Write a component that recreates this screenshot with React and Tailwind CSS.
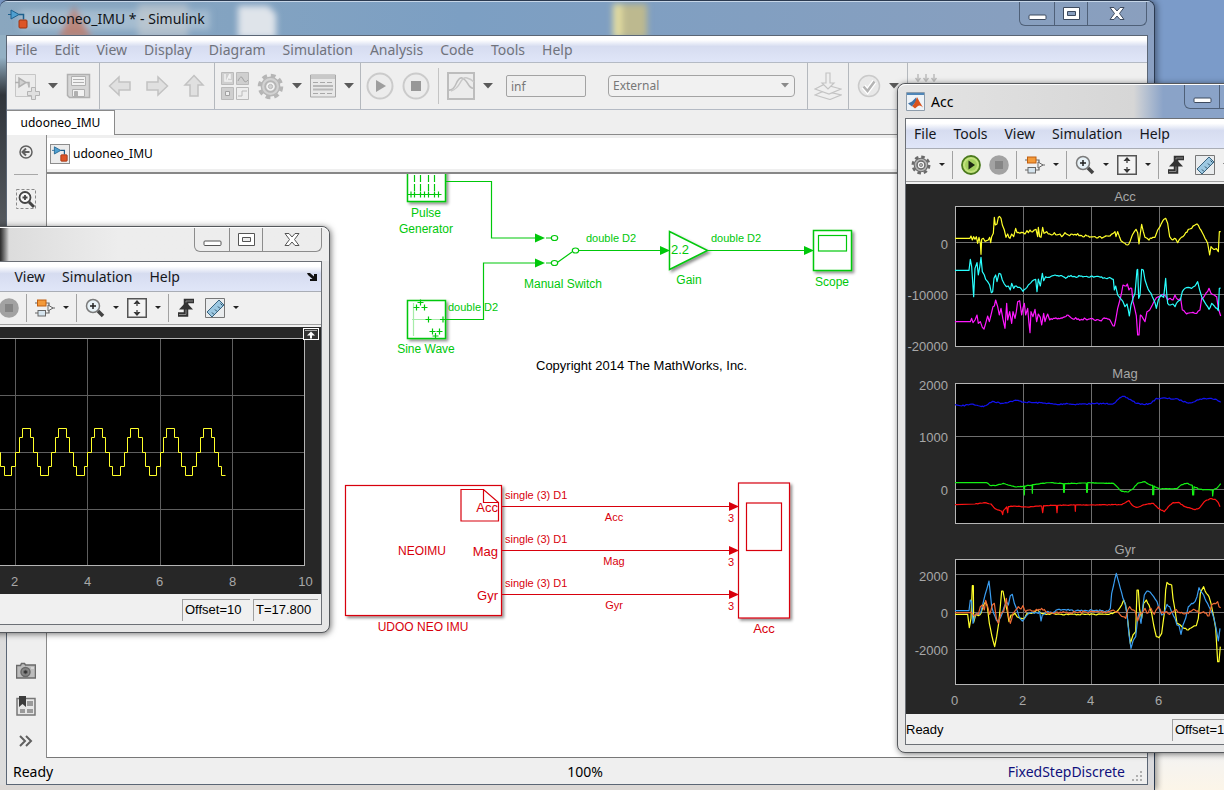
// App.jsx
import { Fragment } from "react";

const GREEN = "#00c80a";
const RED = "#d8000c";

/* ---------- shared window parts ---------- */

function CaptionButtons({ glass }) {
  const line = glass ? "border-[#4f6078]" : "border-[#8c8c8c]";
  const ink = glass ? "#3d4a5e" : "#555";
  return (
    <div className={`flex h-6 rounded-b-md border border-t-0 ${line}`}>
      <button aria-label="Minimize" className={`flex w-[35px] items-center justify-center border-r ${line}`}>
        <svg width="19" height="7" className="mt-2">
          <rect x="1" y="1" width="17" height="4.500" rx="1" fill="#fff" stroke={ink} />
        </svg>
      </button>
      <button aria-label="Maximize" className={`flex w-[33px] items-center justify-center border-r ${line}`}>
        <svg width="19" height="15">
          <path
            d="M1.500 1.500h16v12h-16z M5.500 5.500h8v4h-8z"
            fill="#fff"
            fillRule="evenodd"
            stroke={ink}
            strokeLinejoin="round"
          />
        </svg>
      </button>
      <button aria-label="Close" className="flex w-[58px] items-center justify-center">
        <svg width="18" height="15">
          <path
            d="M2 1.500h4l3 3.500 3-3.500h4l-4.500 6 4.500 6h-4l-3-3.500-3 3.500h-4l4.500-6z"
            fill="#fff"
            stroke={ink}
            strokeLinejoin="round"
          />
        </svg>
      </button>
    </div>
  );
}

function Caret({ label, small }) {
  return (
    <button aria-label={label} className={small ? "flex w-1.5 justify-center" : "flex w-2.5 justify-center"}>
      {small ? (
        <svg width="6" height="4">
          <path d="M0 0h6l-3 3z" fill="#222" />
        </svg>
      ) : (
        <svg width="10" height="6">
          <path d="M0 0h10l-5 5.500z" fill="#5a5a5a" />
        </svg>
      )}
    </button>
  );
}

function MenuBar({ items, className, children }) {
  return (
    <nav
      className={`flex items-center gap-[17px] bg-linear-to-b from-white from-15% via-[#d6dcf0] via-40% to-[#e0e6f8] pl-2 text-sm ${className}`}
    >
      {items.map((item) => (
        <button key={item}>{item}</button>
      ))}
      {children}
    </nav>
  );
}

function ModelIcon({ size }) {
  return (
    <svg width={size} height={size} viewBox="0 0 20 20">
      <path d="M0 5.500h3M3 1l8 4.500-8 4.500z" fill="#4e9fd0" stroke="#1d5f8c" />
      <path d="M11 5.500h4.500v5" fill="none" stroke="#1d5f8c" strokeWidth="1.500" />
      <rect x="11" y="11" width="8" height="8" rx="1" fill="#dd5527" stroke="#9c3413" />
    </svg>
  );
}

/* ---------- main window toolbar icons (greyed out) ---------- */

function IconNew() {
  return (
    <svg width="26" height="28" fill="none" stroke="#c6c6c6">
      <path d="M1.500 2.500h20v22h-20z" fill="#ebebeb" />
      <path d="M1 10.500h4M5 6v9l7-4.500zM12 10.500h3v5" stroke="#b0b0b0" strokeWidth="1.500" fill="#d0d0d0" />
      <path d="M17.500 15.500h4v4h4v4h-4v4h-4v-4h-4v-4h4z" fill="#e0e0e0" stroke="#b4b4b4" />
    </svg>
  );
}

function IconSave() {
  return (
    <svg width="25" height="26" fill="none" stroke="#b0b0b0">
      <path d="M1.500 1.500h22v23h-20l-2-2z" fill="#d6d6d6" strokeWidth="1.500" />
      <path d="M5.500 3.500h14v9h-14z" fill="#f2f2f2" />
      <path d="M7 6.500h11M7 9.500h11" />
      <path d="M6.500 16.500h12v7h-12z" fill="#f2f2f2" />
      <path d="M8.500 18.500h3v5h-3z" fill="#b0b0b0" />
    </svg>
  );
}

function IconArrow({ turn }) {
  return (
    <svg width="24" height="24" viewBox="0 0 24 24" className={turn}>
      <path d="M1.500 12l9.500-9v5h11v8h-11v5z" fill="#e0e0e0" stroke="#c2c2c2" strokeWidth="1.500" />
    </svg>
  );
}

function IconLibrary() {
  return (
    <svg width="28" height="28" fill="none" stroke="#bababa">
      <path d="M.5.500h12v12h-12zM15.500.500h12v12h-12zM.5 15.500h12v12h-12z" fill="#cfcfcf" />
      <path d="M15.500 15.500h12v12h-12z" fill="#ededed" />
      <path d="M4 2v7h7M6 8l3-6v5" stroke="#f2f2f2" strokeWidth="1.500" />
      <path d="M17 9q3-7 5-2t5 1" stroke="#a2a2a2" />
      <path d="M4.500 19.500h4v4h-4z" fill="#eee" stroke="#a2a2a2" />
      <path d="M17 24h4v-5h5" />
    </svg>
  );
}

// rounded cog shared by the main toolbar and the scope toolbars
function IconGear({ size, fill, stroke }) {
  return (
    <svg width={size} height={size} viewBox="0 0 28 28" fill="none">
      <circle cx="14" cy="14" r="11.500" stroke={stroke} strokeWidth="3.500" strokeDasharray="5 4.030" />
      <circle cx="14" cy="14" r="9.500" fill={fill} stroke={stroke} strokeWidth="1.500" />
      <circle cx="14" cy="14" r="5.500" fill="#f2f2f2" stroke={stroke} strokeWidth="2" />
      <circle cx="14" cy="14" r="2.200" fill={fill} stroke={stroke} />
    </svg>
  );
}

function IconList() {
  return (
    <svg width="26" height="24" fill="none" stroke="#a8a8a8">
      <path d="M.5 1h25v22h-25z" fill="#e8e8e8" />
      <path d="M1 3h24" stroke="#c8c8c8" strokeWidth="4" />
      <path d="M3 8.500h20" strokeDasharray="5 2" />
      <path d="M3 12h20M3 15.500h20" strokeWidth="2" stroke="#b8b8b8" />
      <path d="M3 19.500h20" strokeDasharray="5 2" />
    </svg>
  );
}

function IconRound({ stop }) {
  return (
    <svg width="28" height="28">
      <circle cx="14" cy="14" r="12.500" fill="#ececec" stroke="#cbcbcb" strokeWidth="2" />
      {stop ? <rect x="9" y="9" width="10" height="10" fill="#989898" /> : <path d="M10 8l10 6-10 6z" fill="#9e9e9e" />}
    </svg>
  );
}

function IconScope() {
  return (
    <svg width="28" height="28" fill="none" stroke="#bdbdbd">
      <path d="M1 1h26v26H1z" fill="#ececec" strokeWidth="2" />
      <path d="M1 18q5 1 8-6t6-6 6 6 6 4" strokeWidth="1.500" />
      <path d="M4 19q6-2 9-8t7-5 7 4" stroke="#c8c8c8" strokeWidth="1.500" />
    </svg>
  );
}

function IconDeploy() {
  return (
    <svg width="28" height="28" fill="#efefef" stroke="#c4c4c4" strokeWidth="1.200">
      <path d="M1 23l9-4 17 4-11 4.500z" />
      <path d="M1 17l9-4.500 17 4.500-12 5z" />
      <path d="M12 1h4v10h4l-6 6-6-6h4z" />
    </svg>
  );
}

function IconCheck() {
  return (
    <svg width="24" height="24" fill="none" stroke="#cacaca">
      <circle cx="12" cy="12" r="10.500" fill="#e8e8e8" strokeWidth="1.500" />
      <path d="M6.500 12.500l4 4.500 7-9.500" stroke="#fff" strokeWidth="5" />
      <path d="M6.500 12.500l4 4.500 7-9.500" stroke="#b4b4b4" strokeWidth="2.500" />
    </svg>
  );
}

function IconBuild() {
  return (
    <svg width="24" height="28" fill="none" stroke="#bdbdbd" strokeWidth="1.500">
      <path d="M4 2v7M12 2v7M20 2v7" />
      <path d="M1.500 6l2.500 3 2.500-3M9.500 6l2.500 3 2.500-3M17.500 6l2.500 3 2.500-3" />
    </svg>
  );
}

function MainToolbar() {
  const group = "flex items-center border-r border-[#b4b8bd]";
  return (
    <div className="flex h-12 border-y border-[#b4bac4] bg-[#efefef]">
      <div className={`${group} gap-2 pr-2 pl-[7px]`}>
        <button aria-label="New"><IconNew /></button>
        <Caret label="New options" />
        <button aria-label="Save"><IconSave /></button>
      </div>
      <div className={`${group} gap-[13px] px-2`}>
        <button aria-label="Back"><IconArrow /></button>
        <button aria-label="Forward"><IconArrow turn="rotate-180" /></button>
        <button aria-label="Up"><IconArrow turn="rotate-90" /></button>
      </div>
      <div className={`${group} gap-2 px-1.5`}>
        <button aria-label="Library"><IconLibrary /></button>
        <button aria-label="Settings"><IconGear size={27} fill="#d2d2d2" stroke="#b6b6b6" /></button>
        <Caret label="Settings options" />
        <button aria-label="Explorer"><IconList /></button>
        <Caret label="Explorer options" />
      </div>
      <div className={`${group} gap-2 pr-3 pl-[5px]`}>
        <button aria-label="Run"><IconRound /></button>
        <button aria-label="Stop"><IconRound stop /></button>
        <span className="h-9 w-px bg-[#c4c4c4]" />
        <button aria-label="Data inspector"><IconScope /></button>
        <Caret label="Inspector options" />
        <input
          aria-label="Stop time"
          defaultValue="inf"
          className="ml-[5px] h-[22px] w-20 rounded-xs border border-[#a3a3a3] bg-[#efefef] px-1 text-xs text-[#777]"
        />
        <div className="relative ml-3.5 flex">
          <select
            aria-label="Simulation mode"
            className="h-[22px] w-[187px] appearance-none rounded-sm border border-[#a3a3a3] bg-[#f1f1f1] px-1 text-xs text-[#777]"
          >
            <option>External</option>
          </select>
          <svg width="8" height="5" className="pointer-events-none absolute top-2 right-1.5">
            <path d="M0 0h8l-4 4.500z" fill="#8a8a8a" />
          </svg>
        </div>
      </div>
      <div className={`${group} px-1.5`}>
        <button aria-label="Deploy"><IconDeploy /></button>
      </div>
      <div className={`${group} gap-2 px-2`}>
        <button aria-label="Check"><IconCheck /></button>
        <Caret label="Check options" />
      </div>
      <div className="flex items-center px-1.5">
        <button aria-label="Build"><IconBuild /></button>
      </div>
    </div>
  );
}

/* ---------- palette on the left of the canvas ---------- */

function Palette() {
  return (
    <div className="flex w-[39px] shrink-0 flex-col items-center bg-[#efefef] pt-[7px] pr-0.5 pb-[7px]">
      <button aria-label="Hide palette">
        <svg width="20" height="20" fill="none" stroke="#606060">
          <circle cx="10" cy="10" r="6" strokeWidth="1.500" />
          <path d="M13.500 10h-6M10 6.500L6.500 10l3.500 3.500" strokeWidth="2" />
        </svg>
      </button>
      <span className="my-3 h-px w-6 bg-[#a8a8a8]" />
      <button aria-label="Fit to view" className="mt-0.5">
        <svg width="20" height="20" fill="none" stroke="#444">
          <path d="M.5.500h19v19h-19z" strokeDasharray="3 2" stroke="#8a8a8a" />
          <circle cx="9" cy="8.500" r="5.500" fill="#f8f8f8" strokeWidth="1.800" />
          <path d="M6.500 8.500h5M9 6v5" strokeWidth="1.800" />
          <path d="M13 13l5 5" strokeWidth="3" />
        </svg>
      </button>
      <div className="mt-auto flex flex-col gap-[15px]">
        <button aria-label="Screenshot">
          <svg width="20" height="20" fill="none" stroke="#6a6a6a">
            <path d="M.5 4.500h4l1-2h3l1 1.500h10v13h-19z" fill="#bcbcbc" strokeWidth="1.500" />
            <circle cx="9.500" cy="11" r="4.500" fill="#888" strokeWidth="1.500" />
            <circle cx="9.500" cy="11" r="2" fill="#333" />
            <path d="M15 7h3" stroke="#eee" />
          </svg>
        </button>
        <button aria-label="Model browser">
          <svg width="20" height="20" fill="none" stroke="#777">
            <path d="M1 2.500h18v16.500H1z" fill="#e6e6e6" strokeWidth="1.500" />
            <path d="M11 5h6v5h-6zM4 13h5v4H4zM11 13h6v4h-6z" fill="#9a9a9a" stroke="none" />
            <path d="M3 0h7v11l-3.500-3L3 11z" fill="#3c3c3c" stroke="none" />
          </svg>
        </button>
        <button aria-label="More">
          <svg width="20" height="20" fill="none" stroke="#606060" strokeWidth="2">
            <path d="M4 5l5 5-5 5M10 5l5 5-5 5" />
          </svg>
        </button>
      </div>
    </div>
  );
}

/* ---------- block diagram ---------- */

function Plus({ x, y }) {
  return <path d={`M${x - 3} ${y}h6M${x} ${y - 3}v6`} />;
}

function Arrow({ x, y, color }) {
  return <path d={`M${x} ${y}l-10-4.500v9z`} fill={color} stroke="none" />;
}

function Label({ x, y, size = 12, anchor = "middle", color, children }) {
  return (
    <text x={x} y={y} fontSize={size} textAnchor={anchor} fill={color} stroke="none">
      {children}
    </text>
  );
}

const SINE_MARKS = [
  [416.5, 307.5], [420.5, 302.5], [424.5, 307.5], [428.5, 319.5],
  [443, 319.5], [432.5, 331.5], [439.5, 331.5], [435.5, 336],
];

const SIGNALS = [
  { name: "Acc", y: 506.5 },
  { name: "Mag", y: 550.5 },
  { name: "Gyr", y: 594.5 },
];

function Diagram() {
  return (
    <svg className="absolute inset-0 size-full font-['Liberation_Sans',sans-serif]" fill="none">
      <defs>
        <filter id="shadow" x="-20%" y="-20%" width="150%" height="150%">
          <feDropShadow dx="2" dy="2" stdDeviation="1.500" floodColor="#000" floodOpacity="0.45" />
        </filter>
      </defs>
      <g transform="translate(-47 -174)">
        <g stroke={GREEN} strokeWidth="1.200">
          <g fill="#fff" filter="url(#shadow)" strokeWidth="1.500">
            <rect x="407.500" y="163.500" width="38" height="38" />
            <rect x="407.500" y="300.500" width="38" height="38" />
            <rect x="813.500" y="230.500" width="38" height="40" />
            <path d="M669.500 231.500v38l38-19z" />
          </g>
          <path d="M414.500 166v28M420.500 166v28M428.500 166v28M434.500 166v28" strokeDasharray="7 2" />
          <path d="M409 194.500h32" />
          {[411, 414.5, 420.5, 424.5, 428.5, 434.5, 438.5].map((x) => (
            <Plus key={x} x={x} y={194.5} />
          ))}
          <path d="M446 181.500h45.500v56.500H536M446 319.500h37.500V263H536" />
          <Arrow x={545} y={238} color={GREEN} />
          <Arrow x={545} y={263} color={GREEN} />
          <path d="M546 238h5M546 263h5M558 262l14-10M579 250.500h82M708 250.500h97" />
          <ellipse cx="554.500" cy="238" rx="3.200" ry="2.500" />
          <ellipse cx="554.500" cy="263" rx="3.200" ry="2.500" />
          <ellipse cx="575.500" cy="250.500" rx="3.200" ry="2.500" />
          <Arrow x={670} y={250.5} color={GREEN} />
          <Arrow x={814} y={250.5} color={GREEN} />
          <rect x="818.500" y="235.500" width="28" height="15.500" />
          <path d="M413.500 303v33M412 319.500h32" strokeOpacity="0.35" />
          {SINE_MARKS.map(([x, y]) => (
            <Plus key={`${x}-${y}`} x={x} y={y} />
          ))}
          <Label x={426} y={217} color={GREEN}>Pulse</Label>
          <Label x={426} y={233} color={GREEN}>Generator</Label>
          <Label x={426} y={353} color={GREEN}>Sine Wave</Label>
          <Label x={563} y={288} color={GREEN}>Manual Switch</Label>
          <Label x={689} y={284} color={GREEN}>Gain</Label>
          <Label x={832} y={286} color={GREEN}>Scope</Label>
          <Label x={671} y={254} size={13} anchor="start" color={GREEN}>2.2</Label>
          <Label x={586} y={242} size={11} anchor="start" color={GREEN}>double D2</Label>
          <Label x={711} y={242} size={11} anchor="start" color={GREEN}>double D2</Label>
          <Label x={448} y={311} size={11} anchor="start" color={GREEN}>double D2</Label>
        </g>

        <Label x={536} y={370} size={13} anchor="start" color="#000">
          Copyright 2014 The MathWorks, Inc.
        </Label>

        <g stroke={RED} strokeWidth="1.200">
          <g fill="#fff" filter="url(#shadow)">
            <rect x="345.500" y="485.500" width="156" height="130" />
            <rect x="738.500" y="483" width="51" height="135" />
          </g>
          <path d="M461 489.500h22.500l15 13v18.500H461zM483.500 489.500v13h15" />
          <rect x="746.500" y="503" width="35" height="47.500" />
          <Label x={422} y={555} color={RED}>NEOIMU</Label>
          <Label x={423} y={631} color={RED}>UDOO NEO IMU</Label>
          <Label x={764} y={633} size={13} color={RED}>Acc</Label>
          {SIGNALS.map(({ name, y }) => (
            <Fragment key={name}>
              <path d={`M502 ${y}H730`} />
              <Arrow x={739} y={y} color={RED} />
              <Label x={498} y={y + 5} size={13} anchor="end" color={RED}>{name}</Label>
              <Label x={505} y={y - 8} size={11} anchor="start" color={RED}>single (3) D1</Label>
              <Label x={614} y={y + 14} size={11} color={RED}>{name}</Label>
              <Label x={731} y={y + 15} size={11} color={RED}>3</Label>
            </Fragment>
          ))}
        </g>
      </g>
    </svg>
  );
}

function MainWindow() {
  return (
    <section className="mr-[69px] flex flex-1 flex-col overflow-hidden rounded-t-lg border-t border-r border-[#2b3a50] bg-[#7d9cc0] shadow-[2px_0_6px_rgba(0,0,0,0.4)]">
      <header className="relative flex h-[34px] shrink-0 items-start border-t border-[#c6d6e8] bg-linear-to-r from-[#8aa7bf] via-[#7c9fc3] via-40% to-[#8a9fbe] pr-[7px]">
        <svg className="absolute inset-0 size-full">
          <filter id="soft" x="-30%" y="-30%" width="160%" height="160%">
            <feGaussianBlur stdDeviation="3" />
          </filter>
          <g filter="url(#soft)">
            <rect x="20" y="8" width="190" height="20" fill="#b9cbda" opacity="0.6" />
            <path d="M58 36l16-32 18 32z" fill="#c07a68" opacity="0.8" />
            <rect x="138" y="2" width="50" height="34" fill="#c6ccd0" opacity="0.6" />
            <path d="M238 4h30l8 8v24h-38z" fill="#dfe4ea" />
            <rect x="613" y="2" width="34" height="34" fill="#bdb98f" />
            <rect x="613" y="2" width="9" height="34" fill="#e2dca0" />
          </g>
        </svg>
        <div className="relative flex h-full items-center gap-1 pl-2">
          <ModelIcon size={20} />
          <h1 className="text-sm text-[#101418]">udooneo_IMU * - Simulink</h1>
        </div>
        <div className="relative ml-auto">
          <CaptionButtons glass />
        </div>
      </header>

      <div className="flex flex-1">
        <div className="w-[7px] shrink-0 border-r border-[#5b6675] bg-linear-to-b from-[#93b0c4] from-3% via-[#30353b] via-8% to-[#dcdcdc] to-80%" />
        <div className="flex min-w-0 flex-1 flex-col border-y border-[#5b6675] bg-[#efefef]">
          <MenuBar
            className="h-[26px] shrink-0 pt-0.5 text-[#70737c]"
            items={["File", "Edit", "View", "Display", "Diagram", "Simulation", "Analysis", "Code", "Tools", "Help"]}
          />
          <MainToolbar />
          <div className="flex h-[25px] shrink-0">
            <button className="w-[108px] border-t border-r border-[#8a8a8a] bg-white text-xs">udooneo_IMU</button>
            <span className="flex-1 border-b border-[#8a8a8a]" />
          </div>
          <div className="flex flex-1">
            <Palette />
            <div className="flex min-w-0 flex-1 flex-col border-l border-[#8a8a8a]">
              <div className="flex h-[37px] shrink-0 items-center gap-[3px] border-y-3 border-[#efefef] bg-white pl-[3px] text-xs">
                <span className="border border-[#8c8c8c] bg-[#ececec] p-px">
                  <ModelIcon size={16} />
                </span>
                udooneo_IMU
              </div>
              <main className="relative flex-1 border-t-2 border-b border-[#878787] border-b-[#777] bg-white">
                <Diagram />
              </main>
            </div>
          </div>
          <footer className="relative flex h-[26px] shrink-0 items-center pt-0.5 pr-[22px] pl-1.5 text-sm">
            <span className="flex-1">Ready</span>
            <span className="pl-8">100%</span>
            <span className="flex-1 text-right text-[#10107c]">FixedStepDiscrete</span>
            <svg width="12" height="12" className="absolute right-1 bottom-0.5" fill="#b0b0b0">
              <path d="M9 1h2v2H9zM9 5h2v2H9zM5 5h2v2H5zM9 9h2v2H9zM5 9h2v2H5zM1 9h2v2H1z" />
            </svg>
          </footer>
        </div>
        <div className="w-[7px] shrink-0 border-l border-[#5b6675] bg-linear-to-b from-[#8aa0c2] from-10% to-[#d9d9dc] to-90%" />
      </div>
      <div className="h-[5px] shrink-0 bg-[#dcd8d5]" />
    </section>
  );
}

/* ---------- scope windows ---------- */

function ScopeToolbar() {
  const sep = <span className="-ml-px h-7 w-px bg-[#a2a2a2]" />;
  return (
    <div className="flex h-[33px] items-center gap-2 border-b border-[#a0a0a0] bg-[#f0f0f0] pl-[5px]">
      <button aria-label="Configuration"><IconGear size={20} fill="#b4b4b4" stroke="#6a6a6a" /></button>
      <Caret small label="Configuration options" />
      {sep}
      <button aria-label="Run">
        <svg width="20" height="20">
          <circle cx="10" cy="10" r="9" fill="#c2e27c" stroke="#4b7a1e" strokeWidth="1.800" />
          <circle cx="10" cy="10" r="6" fill="#a4d060" />
          <path d="M7.500 5.500l6.500 4.500-6.500 4.500z" fill="#1c2612" />
        </svg>
      </button>
      <button aria-label="Stop">
        <svg width="20" height="20">
          <circle cx="10" cy="10" r="9.800" fill="#a2a2a2" />
          <rect x="6" y="6" width="8" height="8" fill="#858585" />
        </svg>
      </button>
      {sep}
      <button aria-label="Highlight block">
        <svg width="20" height="20" fill="none" stroke="#666">
          <path d="M0 5h3M11 5h3v4M0 15h3M11 15h3v-4M14 10h6" strokeWidth="1.200" />
          <rect x="2.500" y="2" width="8.500" height="6" fill="#f39a3a" stroke="#c05f10" />
          <rect x="3" y="12.500" width="7.500" height="5.500" fill="#d5e4ee" />
          <path d="M13 7l5 3-5 3z" fill="#f5f5f5" />
        </svg>
      </button>
      <Caret small label="Highlight options" />
      {sep}
      <button aria-label="Zoom">
        <svg width="20" height="20" fill="none">
          <circle cx="8" cy="8" r="6.500" fill="#e8f2f7" stroke="#7b7b7b" strokeWidth="1.500" />
          <path d="M5 8h6M8 5v6" stroke="#222" strokeWidth="1.500" />
          <path d="M13 13l5 5" stroke="#444" strokeWidth="3.500" />
        </svg>
      </button>
      <Caret small label="Zoom options" />
      <button aria-label="Scale axes">
        <svg width="20" height="20">
          <path d="M.75.750h18.500v18.500H.75z" fill="#f4f4f4" stroke="#555" strokeWidth="1.500" />
          <path d="M10 2l3.500 4h-7zM10 18l3.500-4h-7z" fill="#333" />
          <path d="M10 5v3M10 12v3" stroke="#555" strokeWidth="1.500" />
        </svg>
      </button>
      <Caret small label="Scale options" />
      {sep}
      <button aria-label="Trigger">
        <svg width="20" height="20" fill="none">
          <path d="M1 16.500h8V3h8" stroke="#333" strokeWidth="4.500" />
          <path d="M2 16.500h7V3h7" stroke="#888" />
          <path d="M9 4l7 7.500H2z" fill="#333" />
        </svg>
      </button>
      <button aria-label="Measure">
        <svg width="20" height="20" fill="none">
          <path d="M.5.500h19v19H.5z" fill="#e9ecee" stroke="#777" />
          <path d="M2 14L14 2l5 5L7 19z" fill="#9cc8e2" stroke="#39647f" />
          <path d="M7 14.500l2 2M10 11.500l2 2M13 8.500l2 2M15.500 5.500l2 2" stroke="#26475c" />
        </svg>
      </button>
      <Caret small label="Measure options" />
    </div>
  );
}

function ScopeWindow({ title, glass, className, titleClass, menuExtra, time, children }) {
  return (
    <section
      className={`absolute w-[423px] rounded-lg border border-[#55585c] bg-[#e6e6e6] px-[7px] pb-[7px] shadow-[1px_1px_6px_rgba(0,0,0,0.55)] ${className}`}
    >
      <header className={`-mx-[7px] flex h-[34px] items-start rounded-t-lg border-t border-white px-[7px] ${titleClass}`}>
        <div className="flex h-full items-center gap-1.5 pl-px">
          <svg width="19" height="19">
            <path d="M.5.500h18v18H.5z" fill="#eef3f8" stroke="#8d9cab" />
            <path d="M1 1h17v2H1z" fill="#4f86b8" />
            <path d="M2 11.500l4-2 4-4 1 3-5 6z" fill="#3f72a6" />
            <path d="M6 14q3-2 5-9 2.500 5 6 10.500-3-3-5-1.500l-3 2.500z" fill="#d9531e" />
          </svg>
          <h2 className="text-sm">{title}</h2>
        </div>
        <div className="ml-auto">
          <CaptionButtons glass={glass} />
        </div>
      </header>
      <div className="border border-[#6c7076] bg-[#f0f0f0]">
        <MenuBar
          className="h-[30px] border-b border-[#a9adb5] text-[#15171c]"
          items={["File", "Tools", "View", "Simulation", "Help"]}
        >
          {menuExtra}
        </MenuBar>
        <ScopeToolbar />
        <div className="mt-0.5 bg-[#272727]">{children}</div>
        <footer className="flex h-[30px] items-center gap-[3px] pt-0.5 pr-[3px] font-['Liberation_Sans',sans-serif] text-[13px]">
          <span className="flex-1">Ready</span>
          <span className="h-[22px] w-[68px] border-t border-l border-[#a0a0a0] pl-0.5">Offset=10</span>
          <span className="h-[22px] w-[65px] border-t border-l border-[#a0a0a0] pl-0.5">{time}</span>
        </footer>
      </div>
    </section>
  );
}

const PLOT_FONT = "block w-full text-[13px] font-['Liberation_Sans',sans-serif]";

// one period of the sampled sine: [offset, level]
const SINE_STEPS = [
  [0, 452.5], [3.5, 437.5], [6.5, 428.5], [14.5, 437.5],
  [18, 452.5], [21.5, 466.5], [25, 475.5], [32.5, 466.5],
];

function sinePath() {
  let d = "M-24 475.5";
  for (let k = -1; k < 6; k++) {
    SINE_STEPS.forEach(([dx, y], i) => {
      if (k === 5 && i === 7) return;
      d += `H${Math.round(15 + 36.2 * k + dx) + 0.5}V${y}`;
    });
  }
  return d + "H225.5";
}

function SinePlot() {
  return (
    <svg height="267" className={PLOT_FONT} fill="none">
      <g transform="translate(84 -327)">
        <rect x="-60" y="338.500" width="364.500" height="227" fill="#000" stroke="#b5b5b5" />
        <path
          d="M15.500 339v226M87.500 339v226M160.500 339v226M232.500 339v226M-60 395.500h364M-60 452.500h364M-60 509.500h364"
          stroke="#5e5e5e"
        />
        <path d={sinePath()} stroke="#ffff2a" />
        <g fill="#a8a8a8" textAnchor="middle">
          <text x="14.500" y="586">2</text>
          <text x="87.500" y="586">4</text>
          <text x="159.500" y="586">6</text>
          <text x="232.500" y="586">8</text>
          <text x="305.500" y="586">10</text>
        </g>
        <rect x="303.500" y="328.500" width="15" height="11" fill="#333" stroke="#fff" />
        <path d="M305 330.500h12" stroke="#aaa" />
        <path d="M311 331.500l4 4h-3v3h-2v-3h-3z" fill="#fff" />
      </g>
    </svg>
  );
}

// Turns "x,y x,y ..." key points into a polyline with measurement noise.
function noisy(keys, amp) {
  const pts = keys.split(" ").map((p) => p.split(",").map(Number));
  let seed = 7;
  const rand = () => {
    seed = (seed * 16807) % 2147483647;
    return seed / 2147483647 - 0.5;
  };
  const out = [];
  pts.forEach(([x, y], i) => {
    out.push(`${x},${y}`);
    const next = pts[i + 1];
    if (!next || i === 0) return;
    const [nx, ny] = next;
    for (let t = x + 4; t < nx - 2; t += 4) {
      const base = y + ((ny - y) * (t - x)) / (nx - x);
      out.push(`${t},${(base + rand() * amp * 2).toFixed(1)}`);
    }
  });
  return out.join(" ");
}

const ACC_X = "180,175 225,175 228,168 232,180 236,170 240,178 244,170 248,190 252,172 256,190 258,223 260,178 265,175 270,184 275,182 280,180 284,172 287,188 290,170 295,160 298,112 301,135 306,132 310,112 318,115 322,135 328,150 333,172 338,162 345,175 350,162 356,170 362,145 366,158 375,160 385,158 390,162 396,152 400,158 405,150 412,156 418,150 423,148 428,170 430,142 434,170 438,172 443,142 447,160 455,155 460,162 470,165 478,158 485,165 495,162 500,170 510,158 520,165 540,163 560,167 580,168 600,170 625,172 645,168 655,160 660,155 663,170 668,155 674,172 682,185 690,190 698,195 706,182 712,165 718,155 723,148 728,158 732,192 736,160 740,133 745,155 750,172 756,175 762,180 770,175 780,172 788,150 795,140 802,125 812,115 818,130 824,170 830,178 838,175 848,188 856,175 864,170 872,158 880,148 890,145 900,135 907,132 914,145 922,158 930,175 938,190 944,225 948,200 956,208 964,206 970,215 973,155 977,155";
const ACC_Y = "180,271 222,271 226,238 230,260 236,350 240,265 246,248 250,285 254,262 258,232 262,275 268,285 272,298 278,305 284,315 289,338 293,335 297,295 302,285 306,305 312,280 317,282 322,300 328,312 334,320 340,318 346,330 350,310 356,325 364,318 374,322 384,334 392,326 400,315 408,308 416,300 422,298 426,335 430,297 436,318 442,280 446,302 452,290 460,292 470,288 480,285 495,287 505,290 512,295 520,288 540,290 560,288 600,290 640,294 655,298 658,330 662,318 668,345 676,355 684,365 690,380 696,372 703,408 708,375 714,355 720,340 726,270 728,268 731,355 735,345 740,268 745,270 750,300 756,318 764,335 772,350 780,368 784,385 790,360 798,345 806,352 812,295 815,340 818,370 826,375 834,372 840,380 848,365 856,360 862,335 870,325 880,322 890,325 900,318 908,305 914,330 920,350 928,365 934,375 942,388 950,370 958,378 966,385 970,392 973,325 977,324";
const ACC_Z = "180,425 226,425 230,415 234,428 240,420 246,405 250,430 256,425 262,442 267,447 272,430 278,408 283,425 288,405 294,380 298,378 302,360 308,380 313,405 318,385 324,418 330,445 335,370 338,420 344,395 350,430 354,395 360,415 364,395 368,365 374,362 380,405 388,370 392,405 398,385 405,458 408,395 414,410 420,388 425,425 430,402 436,412 440,435 446,400 450,425 458,402 464,420 475,415 490,415 505,412 516,405 530,415 560,418 590,415 615,422 630,415 645,420 650,430 658,438 662,420 668,385 676,355 684,315 690,318 697,312 702,330 710,325 714,365 718,380 724,408 728,465 732,465 736,405 744,415 750,425 756,395 764,390 772,375 780,360 790,350 800,345 812,348 818,360 826,355 834,360 840,345 850,360 857,355 862,390 875,402 890,398 905,400 915,390 920,355 930,345 942,325 948,340 958,345 965,350 970,385 977,408";
const MAG_X = "180,134 200,138 230,132 265,140 280,132 293,124 320,130 365,121 385,126 420,128 450,129 490,134 515,130 530,133 600,131 655,131 670,118 685,109 705,118 725,130 750,134 770,128 785,115 815,115 850,118 875,128 895,126 915,117 945,115 965,119 977,127";
const MAG_Y = "180,368 275,368 285,376 300,377 325,370 350,378 365,381 387,378 388,405 389,378 411,375 412,400 413,374 440,370 470,368 505,371 506,397 508,397 509,371 574,369 575,397 577,397 578,368 655,370 668,382 680,394 700,396 712,388 728,370 750,365 760,372 773,376 773,404 776,404 777,378 795,387 845,386 860,374 875,370 892,376 893,405 896,405 897,380 915,388 952,390 953,408 955,390 965,385 977,371";
const MAG_Z = "180,434 240,432 270,428 288,432 300,446 320,454 323,464 325,452 335,441 338,458 340,440 360,438 395,441 440,438 443,458 446,437 484,436 486,458 488,436 540,435 541,454 542,435 680,434 702,422 712,436 725,442 750,434 775,430 790,445 808,455 820,440 835,428 850,427 870,440 900,449 912,445 928,425 945,416 960,418 970,428 975,440";
const GYR_X = "180,238 218,238 223,278 228,250 232,152 235,152 236,262 242,240 250,242 258,235 266,210 272,200 277,215 283,265 290,300 299,335 305,305 311,265 315,225 320,168 324,168 330,200 336,225 342,260 348,240 354,240 360,235 366,245 376,250 386,252 396,235 410,235 425,225 440,235 455,238 470,235 500,238 640,238 660,232 670,225 680,210 686,195 692,210 698,255 706,325 714,300 722,290 726,165 730,165 734,225 740,250 746,205 754,195 762,210 770,235 776,270 784,305 792,308 800,295 808,235 812,165 816,142 822,148 830,150 834,190 840,225 846,265 856,270 868,280 880,285 894,275 904,272 910,250 916,175 926,155 934,175 942,185 948,205 956,245 962,280 968,380 972,380 976,335";
const GYR_Y = "180,227 222,227 226,195 230,200 234,265 240,240 250,238 258,230 264,205 270,180 276,160 282,138 286,175 290,215 296,235 304,255 310,262 318,245 326,220 334,200 340,210 346,182 352,178 358,205 364,220 372,245 382,258 392,245 400,235 410,232 430,235 434,230 438,258 442,240 455,232 480,230 490,223 520,223 540,228 570,226 640,228 646,220 650,175 656,150 664,115 668,130 676,160 684,190 690,205 696,235 702,300 708,340 714,318 722,305 728,250 732,235 738,265 744,210 748,180 756,168 766,172 776,185 786,200 792,220 800,240 808,232 816,208 824,215 832,235 840,250 846,270 852,272 858,298 864,270 872,250 880,215 890,205 900,200 906,185 912,158 918,170 926,180 934,200 942,215 950,230 958,255 966,295 970,318 975,280";
const GYR_Z = "180,233 225,233 235,240 250,238 256,215 262,210 268,225 272,196 278,215 284,238 292,210 298,205 304,250 310,265 318,235 326,230 334,190 340,240 346,265 354,235 362,225 370,215 378,222 384,212 392,230 402,225 420,228 440,220 455,232 500,233 640,230 655,225 670,232 676,240 684,245 692,250 698,225 704,215 712,225 720,228 728,258 736,235 744,230 750,220 756,235 768,220 778,238 790,215 800,235 812,230 824,238 840,225 860,232 880,235 900,225 916,235 926,230 942,243 950,210 958,205 968,200 972,215 977,218";

const PLOTS = [
  {
    name: "Acc",
    titleY: 201,
    top: 206.5,
    height: 140,
    origin: 180,
    grid: [[242.5, "0", 249], [294.5, "-10000", 300], [346.5, "-20000", 351]],
    series: [
      { color: "#ff19ff", keys: ACC_Z, amp: 4 },
      { color: "#2affff", keys: ACC_Y, amp: 3 },
      { color: "#ffff2a", keys: ACC_X, amp: 4 },
    ],
  },
  {
    name: "Mag",
    titleY: 378,
    top: 383.5,
    height: 140,
    origin: 360,
    grid: [[383.5, "2000", 390], [436.5, "1000", 442], [489.5, "0", 495]],
    series: [
      { color: "#1212f0", keys: MAG_X, amp: 2 },
      { color: "#14f014", keys: MAG_Y, amp: 1 },
      { color: "#ff1414", keys: MAG_Z, amp: 1 },
    ],
  },
  {
    name: "Gyr",
    titleY: 554,
    top: 559.5,
    height: 125,
    origin: 535,
    grid: [[574.5, "2000", 581], [612.5, "0", 618], [649.5, "-2000", 655]],
    series: [
      { color: "#ffff2a", keys: GYR_X, amp: 2 },
      { color: "#3a9df0", keys: GYR_Y, amp: 3 },
      { color: "#ee6a35", keys: GYR_Z, amp: 4 },
    ],
  },
];

function ImuPlots() {
  return (
    <svg height="530" className={PLOT_FONT} fill="none">
      <g transform="translate(-906 -184)">
        {PLOTS.map((plot) => (
          <g key={plot.name}>
            <text x="1125" y={plot.titleY} textAnchor="middle" fill="#a8a8a8">
              {plot.name}
            </text>
            <rect x="955.500" y={plot.top} width="340" height={plot.height} fill="#000" />
            {[1023.5, 1091.5, 1159.5, 1227.5].map((x) => (
              <path key={x} d={`M${x} ${plot.top}v${plot.height}`} stroke="#6e6e6e" />
            ))}
            {plot.grid.map(([y, label, textY]) => (
              <Fragment key={label}>
                <path d={`M955.5 ${y}h340`} stroke="#6e6e6e" />
                <text x="948" y={textY} textAnchor="end" fill="#a8a8a8">
                  {label}
                </text>
              </Fragment>
            ))}
            <rect x="955.500" y={plot.top} width="340" height={plot.height} stroke="#b5b5b5" />
            <g transform={`translate(895 ${plot.origin}) scale(0.33333)`} strokeWidth="3.600" strokeLinejoin="round">
              {plot.series.map(({ color, keys, amp }) => (
                <polyline key={color} points={noisy(keys, amp)} stroke={color} />
              ))}
            </g>
          </g>
        ))}
        <g fill="#a8a8a8" textAnchor="middle">
          <text x="954.500" y="705">0</text>
          <text x="1022.500" y="705">2</text>
          <text x="1090.500" y="705">4</text>
          <text x="1158.500" y="705">6</text>
        </g>
      </g>
    </svg>
  );
}

export default function App() {
  return (
    <div className="relative flex min-h-screen overflow-hidden bg-linear-to-b from-[#7b9bc9] from-90% via-[#f3f3f3] via-95% to-[#fcf5e8] font-['Noto_Sans',sans-serif] text-black">
      <MainWindow />

      <ScopeWindow
        title="Scope"
        className="top-[226px] -left-[93px]"
        titleClass="bg-linear-to-r from-[#333] from-22% via-[#dcdcdc] via-24% to-[#ededed] to-50%"
        time="T=17.800"
        menuExtra={
          <button aria-label="Dock" className="mr-1 ml-auto">
            <svg width="10" height="8">
              <path d="M0 0h3l4 3.500V1h3v7H3V6h2.500L1 2z" fill="#111" />
            </svg>
          </button>
        }
      >
        <SinePlot />
      </ScopeWindow>

      <ScopeWindow
        title="Acc"
        glass
        className="top-[83px] left-[897px]"
        titleClass="bg-linear-to-r from-[#e4e4e4] via-[#d6d6d6] via-56% to-[#8aa3c8] to-63%"
        time="T=17.800"
      >
        <ImuPlots />
      </ScopeWindow>
    </div>
  );
}
